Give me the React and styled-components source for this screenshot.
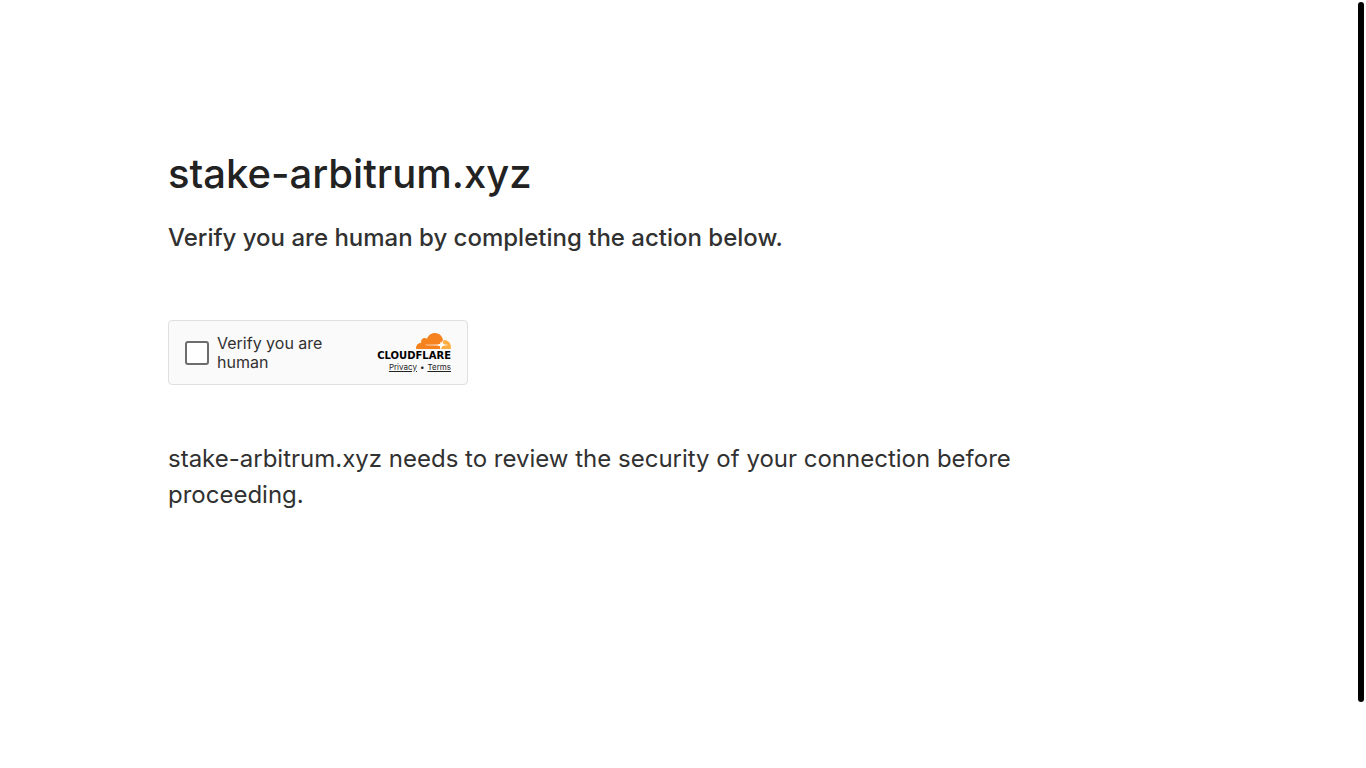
import React from "react";
import styled, { createGlobalStyle } from "styled-components";

const GlobalStyle = createGlobalStyle`
  *, *::before, *::after { box-sizing: border-box; }
  body {
    margin: 0;
    background: #ffffff;
    color: #313131;
    font-family: Inter, "Liberation Sans", sans-serif;
  }
`;

const Main = styled.main`
  max-width: 1128px;
  padding: 144px 24px 64px 168px;
`;

const Host = styled.h1`
  margin: 0;
  font-size: 40px;
  font-weight: 500;
  line-height: 60px;
  color: #222222;
`;

const Instruction = styled.h2`
  margin: 16px 0 0;
  font-size: 24px;
  font-weight: 500;
  line-height: 36px;
`;

const Widget = styled.section`
  display: flex;
  align-items: center;
  justify-content: space-between;
  width: 300px;
  max-width: 100%;
  min-height: 65px;
  margin: 64px 0 56px;
  padding: 0 16px;
  border: 1px solid #e0e0e0;
  border-radius: 4px;
  background: #fafafa;
`;

const CheckLabel = styled.label`
  display: flex;
  align-items: center;
  gap: 8px;
  max-width: 160px;
  font-size: 16px;
  line-height: 19px;
  color: #313131;
`;

const Checkbox = styled.input`
  appearance: none;
  flex: none;
  width: 24px;
  height: 24px;
  margin: 0;
  border: 2px solid #6d6d6d;
  border-radius: 3px;
  background: #ffffff;
  &:checked { background: #f6821f; }
`;

const Branding = styled.div`
  display: flex;
  flex-direction: column;
  align-items: flex-end;
  padding-bottom: 1px;
`;

const Cloud = styled.svg`
  display: block;
  width: 35px;
  height: 17px;
`;

const Wordmark = styled.span`
  margin-top: 1px;
  font-family: "DejaVu Sans", sans-serif;
  font-size: 10px;
  font-weight: 700;
  line-height: 10px;
  color: #000000;
`;

const Links = styled.nav`
  display: flex;
  gap: 3px;
  margin-top: 1px;
  font-size: 8px;
  line-height: 10px;
  color: #232323;
`;

const SmallLink = styled.a`
  color: inherit;
  text-decoration: underline;
`;

const Reason = styled.p`
  margin: 0;
  font-size: 24px;
  line-height: 36px;
`;

const ScrollThumb = styled.div`
  position: fixed;
  top: 2px;
  right: 2px;
  bottom: 66px;
  width: 6px;
  border-radius: 3px;
  background: #000000;
`;

function CloudMark() {
  return (
    <Cloud viewBox="38 0 35 17" aria-hidden="true">
      <path
        fill="#f6821f"
        d="M61.885 15.784L62.063 15.158C62.276 14.413 62.197 13.724 61.84 13.218C61.512 12.752 60.965 12.477 60.301 12.445L47.72 12.284C47.6 12.27 47.48 12.16 47.48 12.065C47.48 11.9 47.6 11.74 47.786 11.72L60.483 11.557C61.989 11.486 63.62 10.246 64.191 8.734L64.915 6.814C64.944 6.732 64.951 6.644 64.934 6.56C64.112 2.807 60.812 0 56.865 0C53.229 0 50.142 2.382 49.035 5.692C48.286 5.122 47.354 4.86 46.423 4.958C44.679 5.134 43.276 6.559 43.103 8.33C43.059 8.772 43.092 9.218 43.199 9.649C40.35 9.733 38.065 12.103 38.065 15.015C38.065 15.275 38.084 15.535 38.121 15.792C38.14 15.92 38.24 16.007 38.364 16.007L61.589 16.01C61.73 16.01 61.85 15.91 61.885 15.784Z"
      />
      <path
        fill="#fbad41"
        d="M66.076 6.953C65.959 6.953 65.843 6.956 65.727 6.962C65.64 6.968 65.57 7.025 65.546 7.109L65.052 8.843C64.839 9.588 64.918 10.277 65.275 10.783C65.603 11.249 66.15 11.523 66.814 11.555L69.496 11.719C69.62 11.73 69.73 11.84 69.73 11.94C69.73 12.11 69.6 12.26 69.43 12.28L66.64 12.445C65.127 12.516 63.497 13.755 62.926 15.268L62.724 15.804C62.69 15.9 62.76 16.01 62.86 16.01L72.457 16.01C72.56 16.01 72.66 15.94 72.69 15.84C72.86 15.224 72.943 14.59 72.943 13.95C72.943 10.086 69.868 6.953 66.076 6.953Z"
      />
      <path
        fill="#ffffff"
        d="M63 8L64 11L67 12L64 13L63 16L62 13L59 12L62 11Z"
      />
    </Cloud>
  );
}

export default function App() {
  return (
    <>
      <GlobalStyle />
      <Main>
        <Host>stake-arbitrum.xyz</Host>
        <Instruction>Verify you are human by completing the action below.</Instruction>
        <Widget>
          <CheckLabel htmlFor="human">
            <Checkbox id="human" type="checkbox" />
            <span>Verify you are human</span>
          </CheckLabel>
          <Branding>
            <CloudMark />
            <Wordmark>CLOUDFLARE</Wordmark>
            <Links>
              <SmallLink href="#privacy">Privacy</SmallLink>
              <span>•</span>
              <SmallLink href="#terms">Terms</SmallLink>
            </Links>
          </Branding>
        </Widget>
        <Reason>
          stake-arbitrum.xyz needs to review the security of your connection before proceeding.
        </Reason>
      </Main>
      <ScrollThumb />
    </>
  );
}
